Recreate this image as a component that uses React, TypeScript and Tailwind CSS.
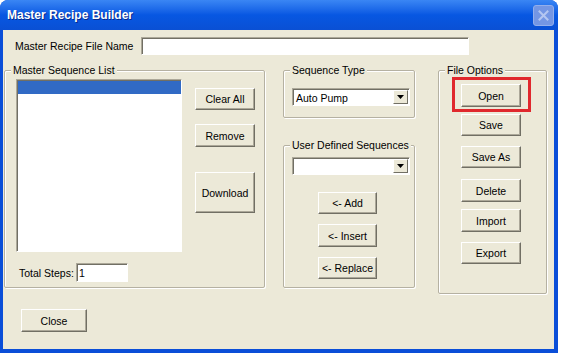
import type {ReactNode} from 'react';

// classic 3D raised button, XP classic scheme
function Btn({label, className}: {label: string; className: string}) {
  return (
    <button
      type="button"
      className={`flex items-center justify-center bg-[#ECE9D8] border border-t-white border-l-white border-r-[#716F64] border-b-[#716F64] shadow-[inset_-1px_-1px_0_#ACA899] text-black ${className}`}
    >
      {label}
    </button>
  );
}

function Sunken({children, className}: {children?: ReactNode; className: string}) {
  return (
    <div
      className={`bg-white border border-t-[#ACA899] border-l-[#ACA899] border-r-white border-b-white shadow-[inset_1px_1px_0_#716F64] ${className}`}
    >
      {children}
    </div>
  );
}

function Combo({value, className}: {value?: string; className: string}) {
  return (
    <Sunken className={`flex items-center w-[118px] h-[18px] ${className}`}>
      <span className="flex-1 pl-[3px] pt-[1px]">{value}</span>
      <div className="flex items-center justify-center w-[15px] h-[14px] mr-[1px] bg-[#ECE9D8] border border-t-white border-l-white border-r-[#716F64] border-b-[#716F64]">
        <svg width="7" height="4" viewBox="0 0 7 4">
          <path d="M0 0h7L3.5 4z" fill="#000" />
        </svg>
      </div>
    </Sunken>
  );
}

function Group({title, className, children}: {title: string; className: string; children?: ReactNode}) {
  return (
    <fieldset
      className={`m-0 p-0 border border-[#B5B1A2] rounded-[2px] shadow-[inset_1px_1px_0_#fff,1px_1px_0_#fff] ${className}`}
    >
      <legend className="ml-[6px] px-[2px] leading-[12px] bg-[#ECE9D8]">{title}</legend>
      {children}
    </fieldset>
  );
}

export default function App() {
  return (
    <div className="w-[561px] h-[353px] bg-white font-['Liberation_Sans',Arial,sans-serif] text-[10.5px] leading-[12px] text-black">
      <div className="flex flex-col w-[558px] h-[353px] rounded-t-[8px] bg-[#0A4ED8] overflow-hidden">
        {/* title bar */}
        <div className="flex items-center h-[30px] pl-[7px] pr-[4px] bg-linear-to-b from-[#3A86F4] via-[#0757E2] to-[#0A50D4]">
          <span className="text-[12px] font-bold text-white [text-shadow:1px_1px_0_#0A2A8A]">Master Recipe Builder</span>
          <div className="ml-auto flex items-center justify-center w-[21px] h-[21px] rounded-[3px] border border-[#93AEEB] bg-[#7496E4]">
            <svg width="11" height="11" viewBox="0 0 11 11">
              <path d="M1.5 1.5l8 8M9.5 1.5l-8 8" stroke="#B4C6F1" strokeWidth="2" strokeLinecap="square" />
            </svg>
          </div>
        </div>

        {/* client area */}
        <div className="flex-1 ml-[3px] mr-[4px] mb-[4px] pt-[7px] bg-[#ECE9D8]">
          <div className="flex items-center h-[18px]">
            <span className="w-[138px] pl-[12px]">Master Recipe File Name</span>
            <Sunken className="w-[328px] h-[18px]" />
          </div>

          <div className="flex items-start mt-[9px]">
            <Group title="Master Sequence List" className="ml-[1px] w-[261px] h-[224px]">
              <div className="flex mt-[3px] ml-[11px]">
                <Sunken className="w-[166px] h-[173px] pt-[1px] pl-[1px]">
                  <div className="h-[13px] bg-[#316AC5]" />
                </Sunken>
                <div className="flex flex-col ml-[13px]">
                  <Btn label="Clear All" className="mt-[9px] w-[60px] h-[22px]" />
                  <Btn label="Remove" className="mt-[14px] w-[60px] h-[23px]" />
                  <Btn label="Download" className="mt-[25px] w-[60px] h-[41px]" />
                </div>
              </div>
              <div className="flex items-center mt-[11px] pl-[14px]">
                <span className="w-[57px]">Total Steps:</span>
                <Sunken className="w-[52px] h-[19px] pl-[2px] pt-[3px]">1</Sunken>
              </div>
            </Group>

            <div className="flex flex-col ml-[18px] w-[132px]">
              <Group title="Sequence Type" className="w-[132px] h-[54px]">
                <Combo value="Auto Pump" className="ml-[8px] mt-[12px]" />
              </Group>
              <Group title="User Defined Sequences" className="mt-[21px] w-[132px] h-[149px]">
                <Combo className="ml-[8px] mt-[6px]" />
                <div className="flex flex-col ml-[34px]">
                  <Btn label="<- Add" className="mt-[17px] w-[59px] h-[22px]" />
                  <Btn label="<- Insert" className="mt-[10px] w-[59px] h-[23px]" />
                  <Btn label="<- Replace" className="mt-[10px] w-[59px] h-[22px]" />
                </div>
              </Group>
            </div>

            <Group title="File Options" className="ml-[23px] w-[109px] h-[230px]">
              <div className="flex flex-col ml-[22px]">
                <div className="relative mt-[8px]">
                  <Btn label="Open" className="w-[60px] h-[23px]" />
                  {/* highlight marker drawn over the button */}
                  <div className="absolute -left-[9px] -top-[7px] w-[79px] h-[35px] border-[3px] border-[#E0282D]" />
                </div>
                <Btn label="Save" className="mt-[7px] w-[60px] h-[22px]" />
                <Btn label="Save As" className="mt-[10px] w-[60px] h-[22px]" />
                <Btn label="Delete" className="mt-[11px] w-[60px] h-[23px]" />
                <Btn label="Import" className="mt-[7px] w-[60px] h-[23px]" />
                <Btn label="Export" className="mt-[10px] w-[60px] h-[22px]" />
              </div>
            </Group>
          </div>

          <Btn label="Close" className="ml-[18px] mt-[15px] w-[66px] h-[23px]" />
        </div>
      </div>
    </div>
  );
}
